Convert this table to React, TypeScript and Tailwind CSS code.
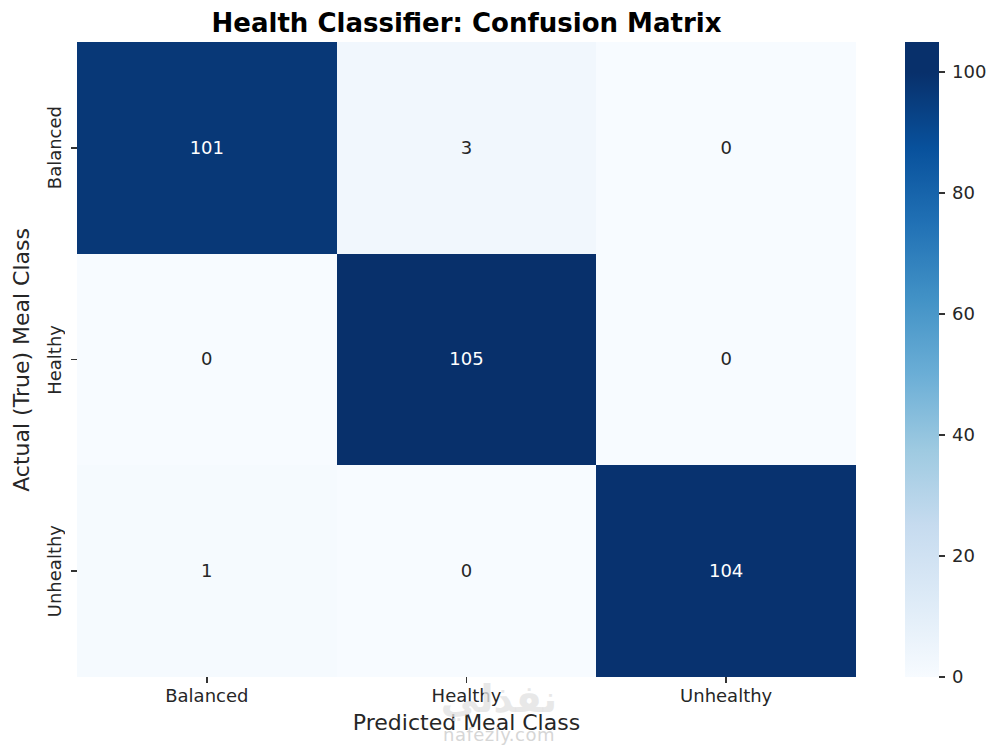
import React from "react";

const FONT = { fontFamily: '"DejaVu Sans", "Liberation Sans", sans-serif' };

const labels = ["Balanced", "Healthy", "Unhealthy"];

const cells: { v: number; bg: string; dark: boolean }[][] = [
  [
    { v: 101, bg: "bg-[#083877]", dark: true },
    { v: 3, bg: "bg-[#f1f7fd]", dark: false },
    { v: 0, bg: "bg-[#f7fbff]", dark: false },
  ],
  [
    { v: 0, bg: "bg-[#f7fbff]", dark: false },
    { v: 105, bg: "bg-[#08306b]", dark: true },
    { v: 0, bg: "bg-[#f7fbff]", dark: false },
  ],
  [
    { v: 1, bg: "bg-[#f5fafe]", dark: false },
    { v: 0, bg: "bg-[#f7fbff]", dark: false },
    { v: 104, bg: "bg-[#08326f]", dark: true },
  ],
];

const cbTicks = [0, 20, 40, 60, 80, 100];
const VMAX = 105;
const H = 635;

export default function App() {
  return (
    <div className="w-[1000px] h-[750px] bg-white relative overflow-hidden text-[#262626]" style={FONT}>
      {/* Title */}
      <div className="h-[42px] pt-[10px] flex justify-center w-[856px] pl-[77px]">
        <div className="w-[779px] text-center text-[26px] leading-none font-bold text-black whitespace-nowrap">
          Health Classifier: Confusion Matrix
        </div>
      </div>

      {/* Main row */}
      <div className="flex h-[635px]">
        {/* y axis label */}
        <div className="w-[44px] flex items-center justify-center">
          <div className="[writing-mode:vertical-rl] rotate-180 text-[22px] leading-none whitespace-nowrap">
            Actual (True) Meal Class
          </div>
        </div>
        {/* y tick labels */}
        <div className="w-[22px] grid grid-rows-3">
          {labels.map((l) => (
            <div key={l} className="flex items-center justify-center">
              <div className="[writing-mode:vertical-rl] rotate-180 text-[18px] leading-none whitespace-nowrap">
                {l}
              </div>
            </div>
          ))}
        </div>
        <div className="w-[5px]" />
        {/* y tick marks */}
        <div className="w-[6px] grid grid-rows-3">
          {labels.map((l) => (
            <div key={l} className="flex items-center">
              <div className="w-[6px] h-[1.5px] bg-[#333333]" />
            </div>
          ))}
        </div>

        {/* heatmap */}
        <div className="w-[779px] h-[635px] grid grid-cols-3 grid-rows-3">
          {cells.flat().map((c, i) => (
            <div
              key={i}
              className={`${c.bg} flex items-center justify-center text-[18px] leading-none ${
                c.dark ? "text-white" : "text-[#262626]"
              }`}
            >
              {c.v}
            </div>
          ))}
        </div>

        <div className="w-[49px]" />

        {/* colorbar */}
        <div className="relative w-[34px] h-[635px] bg-[linear-gradient(to_top,#f7fbff_0%,#deebf7_11.9%,#c6dbef_23.8%,#9ecae1_35.7%,#6baed6_47.6%,#4292c6_59.5%,#2171b5_71.4%,#08519c_83.3%,#08306b_95.2%,#08306b_100%)]">
          {cbTicks.map((t) => (
            <div
              key={t}
              className="absolute left-[34px] flex items-center h-[18px] -translate-y-1/2"
              style={{ top: `${(1 - t / VMAX) * H}px` }}
            >
              <div className="w-[6px] h-[1.5px] bg-[#333333]" />
              <div className="ml-[7px] text-[18px] leading-none">{t}</div>
            </div>
          ))}
        </div>
      </div>

      {/* x ticks and labels */}
      <div className="ml-[77px] w-[779px] grid grid-cols-3">
        {labels.map((l) => (
          <div key={l} className="flex flex-col items-center">
            <div className="w-[1.5px] h-[6px] bg-[#333333]" />
            <div className="mt-[4px] text-[18px] leading-none">{l}</div>
          </div>
        ))}
      </div>
      <div className="ml-[77px] w-[779px] mt-[7px] text-center text-[22px] leading-none">
        Predicted Meal Class
      </div>

      {/* watermark */}
      <div className="absolute left-[438px] top-[680px] w-[122px] flex flex-col items-center pointer-events-none">
        <div className="text-[38px] leading-none text-[#e2e2e2]/80 font-bold" dir="rtl">
          نفذلي
        </div>
        <div className="mt-[8px] text-[18px] leading-none text-[#d6d6d6] tracking-[0.5px]">nafezly.com</div>
      </div>
    </div>
  );
}
